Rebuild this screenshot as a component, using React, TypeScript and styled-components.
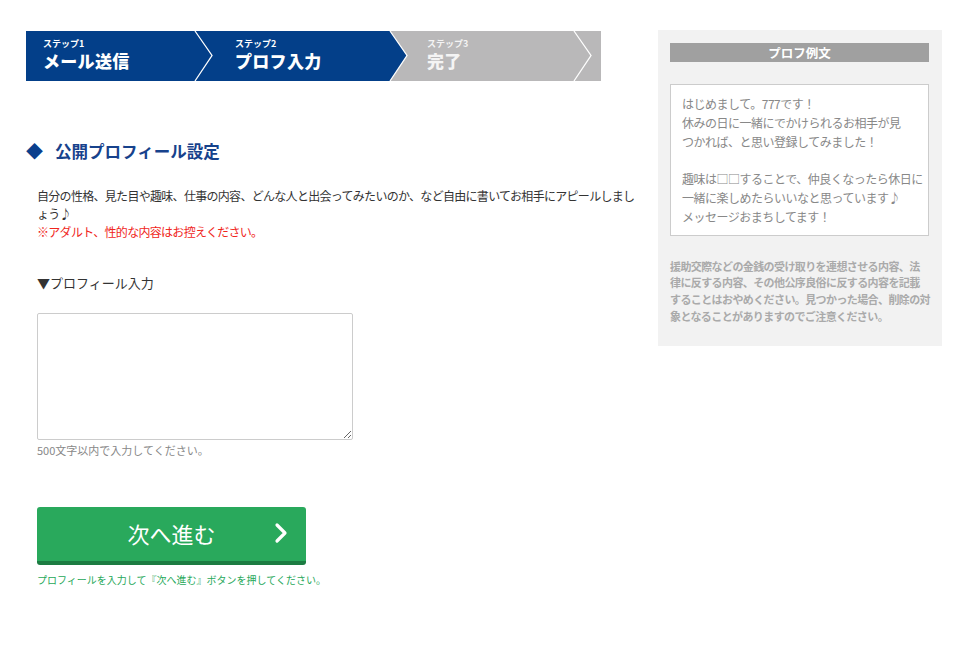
import React from 'react';
import styled, { createGlobalStyle } from 'styled-components';

// Styles
const GlobalStyle = createGlobalStyle`
	body {
		margin: 0;
		background: #fff;
		font-family: 'Noto Sans CJK JP', 'Noto Sans', sans-serif;
		color: #333;
	}
`;

const BLUE = '#033f89';
const GRAY = '#b9b8b9';

const Page = styled.div`
	display: flex;
	align-items: flex-start;
	gap: 17px;
	padding: 30px 0 0 26px;
`;

const Main = styled.div`
	width: 615px;
	display: flex;
	flex-direction: column;
`;

const StepBar = styled.div`
	display: flex;
	width: 575px;
	height: 50px;
	margin-top: 1px;
	background: ${GRAY};
`;

const Step = styled.div<{ $bg: string; $w: number; $pad: number; $z: number }>`
	position: relative;
	z-index: ${(p) => p.$z};
	box-sizing: border-box;
	width: ${(p) => p.$w}px;
	height: 50px;
	padding: 8px 0 0 ${(p) => p.$pad}px;
	background: ${(p) => p.$bg};
	color: ${(p) => (p.$bg === GRAY ? '#f4f4f4' : '#fff')};
	font-weight: bold;

	small {
		display: block;
		font-size: 9px;
		line-height: 10px;
	}

	strong {
		display: block;
		margin-top: 2px;
		font-size: 17px;
		line-height: 20px;
		letter-spacing: 0.3px;
	}
`;

const Chevron = styled.svg`
	position: absolute;
	left: 100%;
	top: 0;
	width: 18px;
	height: 50px;
	overflow: visible;
`;

const Heading = styled.h2`
	display: flex;
	align-items: center;
	gap: 12px;
	margin: 58px 0 0;
	font-size: 16.5px;
	line-height: 24px;
	color: #17428c;
	font-weight: bold;

	span {
		font-size: 17px;
		color: #0b3f8c;
	}
`;

const Lead = styled.p`
	margin: 24px 0 0;
	padding-left: 11px;
	font-size: 12px;
	line-height: 18px;
	letter-spacing: -0.7px;
	color: #333;

	em {
		display: block;
		font-style: normal;
		color: #f0261c;
	}
`;

const Label = styled.div`
	margin-top: 32px;
	padding-left: 11px;
	font-size: 13px;
	line-height: 20px;
	color: #333;
`;

const Field = styled.div`
	display: flex;
	flex-direction: column;
	margin-top: 20px;
	padding-left: 11px;

	textarea {
		box-sizing: border-box;
		width: 316px;
		height: 127px;
		border: 1px solid #ccc;
		border-radius: 2px;
		resize: vertical;
		margin: 0;
	}

	span {
		font-size: 11px;
		line-height: 18px;
		color: #888;
		margin-top: 1px;
	}
`;

const NextButton = styled.button`
	display: grid;
	grid-template-columns: 1fr auto 1fr;
	align-items: center;
	box-sizing: border-box;
	width: 269px;
	height: 58px;
	margin: 48px 0 0 11px;
	padding: 0 18px 2px;
	border: none;
	border-bottom: 4px solid #1c7c42;
	border-radius: 3px;
	background: #29a95c;
	color: #fff;
	font-family: inherit;
	font-size: 22px;

	b {
		grid-column: 2;
		font-weight: normal;
	}

	svg {
		grid-column: 3;
		justify-self: end;
	}
`;

const Hint = styled.div`
	margin: 8px 0 0 11px;
	font-size: 10px;
	line-height: 14px;
	color: #27a85a;
`;

const Side = styled.aside`
	box-sizing: border-box;
	width: 284px;
	padding: 13px 13px 22px 12px;
	background: #f2f2f2;
`;

const SideTitle = styled.div`
	height: 19px;
	background: #a0a0a0;
	color: #fff;
	font-weight: bold;
	font-size: 12.5px;
	line-height: 19px;
	text-align: center;
`;

const Sample = styled.div`
	margin-top: 22px;
	padding: 10px 8px 8px 11px;
	background: #fff;
	border: 1px solid #ccc;
	font-size: 12px;
	line-height: 18.8px;
	letter-spacing: -0.5px;
	white-space: nowrap;
	color: #888;

	p {
		margin: 0;
	}

	p + p {
		margin-top: 18.8px;
	}
`;

const Notice = styled.p`
	margin: 22px 0 0;
	font-size: 11px;
	line-height: 16.7px;
	letter-spacing: -0.6px;
	white-space: nowrap;
	font-weight: bold;
	color: #aaa;
`;

const steps = [
	{ label: 'ステップ1', title: 'メール送信', bg: BLUE, w: 169, pad: 17 },
	{ label: 'ステップ2', title: 'プロフ入力', bg: BLUE, w: 195, pad: 40 },
	{ label: 'ステップ3', title: '完了', bg: GRAY, w: 184, pad: 37 },
];

function App() {
	return (
		<>
			<GlobalStyle />
			<Page>
				<Main>
					<StepBar>
						{steps.map((s, i) => (
							<Step key={s.label} $bg={s.bg} $w={s.w} $pad={s.pad} $z={3 - i}>
								<small>{s.label}</small>
								<strong>{s.title}</strong>
								<Chevron viewBox="0 0 18 50">
									<polygon points="0,0 17,24.5 0,50" fill={s.bg} />
									<polyline points="0,0 17,24.5 0,50" fill="none" stroke="#fff" strokeWidth="1.3" />
								</Chevron>
							</Step>
						))}
					</StepBar>

					<Heading>
						<span>◆</span>公開プロフィール設定
					</Heading>

					<Lead>
						自分の性格、見た目や趣味、仕事の内容、どんな人と出会ってみたいのか、など自由に書いてお相手にアピールしましょう♪
						<em>※アダルト、性的な内容はお控えください。</em>
					</Lead>

					<Label>▼プロフィール入力</Label>

					<Field>
						<textarea />
						<span>500文字以内で入力してください。</span>
					</Field>

					<NextButton type="button">
						<b>次へ進む</b>
						<svg width="14" height="22" viewBox="0 0 14 22">
							<polyline points="3,3 11,11 3,19" fill="none" stroke="#fff" strokeWidth="3.2" strokeLinecap="round" strokeLinejoin="round" />
						</svg>
					</NextButton>
					<Hint>プロフィールを入力して『次へ進む』ボタンを押してください。</Hint>
				</Main>

				<Side>
					<SideTitle>プロフ例文</SideTitle>
					<Sample>
						<p>
							はじめまして。777です！
							<br />
							休みの日に一緒にでかけられるお相手が見
							<br />
							つかれば、と思い登録してみました！
						</p>
						<p>
							趣味は□□することで、仲良くなったら休日に
							<br />
							一緒に楽しめたらいいなと思っています♪
							<br />
							メッセージおまちしてます！
						</p>
					</Sample>
					<Notice>
						援助交際などの金銭の受け取りを連想させる内容、法
						<br />
						律に反する内容、その他公序良俗に反する内容を記載
						<br />
						することはおやめください。見つかった場合、削除の対
						<br />
						象となることがありますのでご注意ください。
					</Notice>
				</Side>
			</Page>
		</>
	);
}

export default App;
